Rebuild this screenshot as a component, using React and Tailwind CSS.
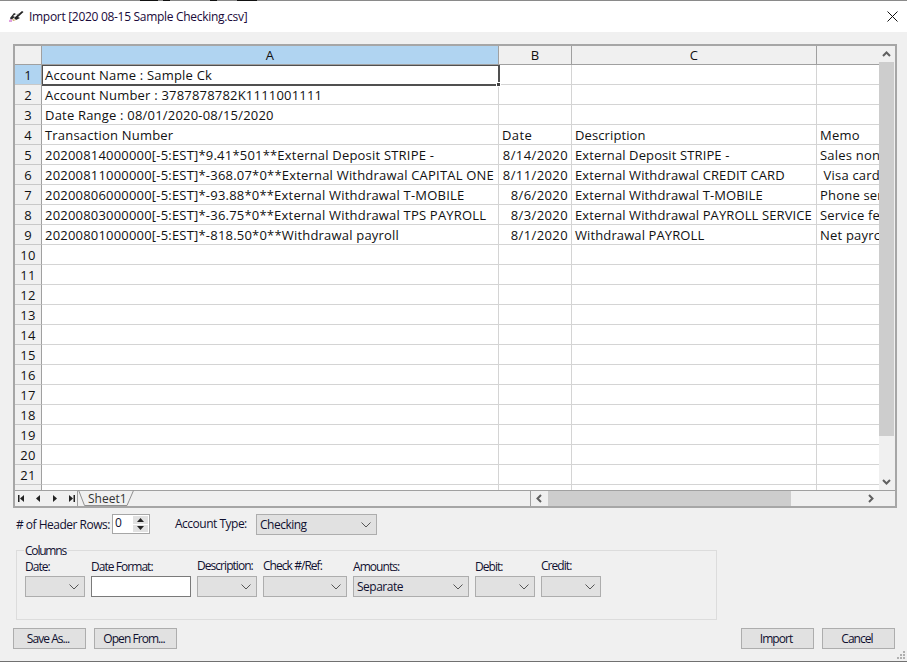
import React from 'react';

const rows = [
  ['Account Name : Sample Ck', '', '', ''],
  ['Account Number : 3787878782K1111001111', '', '', ''],
  ['Date Range : 08/01/2020-08/15/2020', '', '', ''],
  ['Transaction Number', 'Date', 'Description', 'Memo'],
  ['20200814000000[-5:EST]*9.41*501**External Deposit STRIPE -', '8/14/2020', 'External Deposit STRIPE -', 'Sales non'],
  ['20200811000000[-5:EST]*-368.07*0**External Withdrawal CAPITAL ONE', '8/11/2020', 'External Withdrawal CREDIT CARD', ' Visa card'],
  ['20200806000000[-5:EST]*-93.88*0**External Withdrawal T-MOBILE', '8/6/2020', 'External Withdrawal T-MOBILE', 'Phone ser'],
  ['20200803000000[-5:EST]*-36.75*0**External Withdrawal TPS PAYROLL', '8/3/2020', 'External Withdrawal PAYROLL SERVICE', 'Service fe'],
  ['20200801000000[-5:EST]*-818.50*0**Withdrawal payroll', '8/1/2020', 'Withdrawal PAYROLL', 'Net payrc'],
];
for (let i = 0; i < 13; i++) rows.push(['', '', '', '']);

const gridCols = 'grid grid-cols-[27px_457px_73px_245px_62px]';
const ui = "font-['Open_Sans',sans-serif] text-[12px] tracking-[-0.5px] text-[#101030]";
const tight = 'tracking-[-0.95px]';

const Chevron = () => (
  <svg width="10" height="6" viewBox="0 0 10 6" fill="none" stroke="#555" strokeWidth="1">
    <path d="M0.5 0.5 L5 5 L9.5 0.5" />
  </svg>
);

const Select = ({ width, value }) => (
  <div className={`${width} h-[21px] flex items-center justify-between pl-[3px] pr-[5px] bg-[#e1e1e1] border border-[#adadad]`}>
    <span>{value}</span>
    <Chevron />
  </div>
);

const Field = ({ label, lift, children }) => (
  <div className="flex flex-col">
    <div className={`h-[20px] pt-[2px] leading-[18px] whitespace-nowrap ${tight} ${lift ? '-mt-px' : ''}`}>{label}</div>
    <div className={lift ? 'mt-px' : ''}>{children}</div>
  </div>
);

const Button = ({ width, children }) => (
  <button className={`${width} h-[21px] pr-[3px] bg-[#e1e1e1] border border-[#adadad] leading-[18px] ${tight}`}>{children}</button>
);

const ScrollArrow = ({ d }) => (
  <svg width="9" height="9" viewBox="0 0 9 9" fill="none" stroke="#606060" strokeWidth="2">
    <path d={d} />
  </svg>
);

const NavIcon = ({ d, bar }) => (
  <svg width="8" height="9" viewBox="0 0 8 9" fill="#222">
    <path d={d} />
    {bar !== undefined && <rect x={bar} y="1" width="1.5" height="7" />}
  </svg>
);

function Sheet() {
  return (
    <div className="w-[884px] h-[464px] border-2 border-[#a6a6a6] flex flex-col bg-[#f0f0f0]">
      <div className="flex h-[444px]">
        <div className="w-[864px] h-[444px] overflow-hidden bg-white font-['Open_Sans',sans-serif] text-[13px] tracking-[0.2px] text-[#111]">
          <div className={`${gridCols} h-[19px] leading-[18px] text-center`}>
            <div className="bg-[#f0f0f0] border-r border-b border-[#a0a0a0]" />
            <div className="bg-[#b0d4f1] border-r border-b border-[#a0a0a0]">A</div>
            <div className="bg-[#f0f0f0] border-r border-b border-[#a0a0a0]">B</div>
            <div className="bg-[#f0f0f0] border-r border-b border-[#a0a0a0]">C</div>
            <div className="bg-[#f0f0f0] border-b border-[#a0a0a0]" />
          </div>
          {rows.map((r, i) => (
            <div key={i} className={`${gridCols} grid-rows-[20px] h-[20px] leading-[21px]`}>
              <div className={`text-center border-r border-b border-b-[#c8c8c8] border-r-[#a0a0a0] ${i === 0 ? 'bg-[#b0d4f1]' : 'bg-[#f0f0f0]'}`}>{i < 21 ? i + 1 : ''}</div>
              <div className="relative pl-[3px] border-r border-b border-[#d4d4d4] whitespace-nowrap">
                {r[0]}
                {i === 0 && (
                  <div className="absolute z-10 left-0 top-0 w-[458px] h-[21px] border border-b-2 border-r-2 border-[#505050]">
                    <div className="absolute right-[-3px] bottom-[-3px] w-[5px] h-[5px] bg-[#404040] border border-white" />
                  </div>
                )}
              </div>
              <div className={`pr-[3px] border-r border-b border-[#d4d4d4] whitespace-nowrap tracking-[0.4px] ${i === 3 ? 'pl-[3px] tracking-[0.2px]' : 'text-right'}`}>{r[1]}</div>
              <div className="pl-[3px] border-r border-b border-[#d4d4d4] whitespace-nowrap tracking-[0.11px]">{r[2]}</div>
              <div className="pl-[3px] border-b border-[#d4d4d4] whitespace-pre overflow-hidden">{r[3]}</div>
            </div>
          ))}
        </div>
        <div className="w-[16px] flex flex-col bg-[#f0f0f0] pr-px">
          <div className="h-[16px] flex items-center justify-center"><ScrollArrow d="M1 6 L4.5 2.5 L8 6" /></div>
          <div className="h-[374px] bg-[#cdcdcd]" />
          <div className="flex-1 flex items-end justify-center pb-[4px]"><ScrollArrow d="M1 3 L4.5 6.5 L8 3" /></div>
        </div>
      </div>
      <div className="flex h-[16px] border-t border-[#a0a0a0] bg-[#f0f0f0]">
        <div className="w-[63px] flex items-center gap-[9px] pl-[2px] border-r border-[#a0a0a0] -mt-px">
          <NavIcon d="M7 1 L7 8 L3 4.5 Z" bar={1} />
          <NavIcon d="M6 1 L6 8 L2 4.5 Z" />
          <NavIcon d="M2 1 L2 8 L6 4.5 Z" />
          <NavIcon d="M1 1 L1 8 L5 4.5 Z" bar={5.5} />
        </div>
        <div className="relative w-[453px] -mt-px border-r border-[#a0a0a0]">
          <svg className="absolute left-0 top-0" width="60" height="16" fill="none" stroke="#909090">
            <path d="M0.5 0 L6.5 15.5 L49 15.5 L55.5 0.5" />
          </svg>
          <span className="absolute left-[10px] top-0 leading-[17px] font-['Open_Sans',sans-serif] text-[12px] tracking-normal text-[#333]">Sheet1</span>
        </div>
        <div className="flex-1 flex items-center">
          <div className="w-[17px] flex justify-center"><ScrollArrow d="M6 1 L2.5 4.5 L6 8" /></div>
          <div className="w-[243px] h-[15px] bg-[#cdcdcd]" />
          <div className="flex-1 flex justify-end pr-[20px]"><ScrollArrow d="M3 1 L6.5 4.5 L3 8" /></div>
        </div>
      </div>
    </div>
  );
}

export default function App() {
  return (
    <div className="w-[907px] h-[662px] flex flex-col bg-[#f0f0f0] overflow-hidden relative">
      <div className="h-[1px] bg-[#8a8a8a] flex">
        <div className="ml-[140px] w-[18px] bg-[#111]" />
        <div className="ml-[5px] w-[7px] bg-[#111]" />
        <div className="ml-[40px] w-[7px] bg-[#111]" />
        <div className="ml-[20px] w-[20px] bg-[#111]" />
      </div>
      <div className="h-[31px] bg-white flex items-center justify-between pl-[8px] pr-[9px]">
        <div className="flex items-center gap-[5px] font-['Open_Sans',sans-serif] text-[12px] tracking-[-0.3px] text-[#1a0a3a]">
          <svg width="16" height="13" viewBox="0 0 16 13">
            <path d="M2 8 L6 3 L8 4 L5 6 L7 7 L3 10 Z" fill="#2a2a2a" />
            <path d="M6 8 L14 1 L15.5 2 L10 7 L12 8 L8 10 Z" fill="#222" />
            <path d="M8 5 L11 3 L10 5 Z" fill="#999" />
            <path d="M1 10 L4 9 L4 12 L1 12 Z" fill="#e0a0e0" />
            <path d="M4 9 L8 10 L5 11 Z" fill="#c8a860" />
          </svg>
          <span>Import [2020 08-15 Sample Checking.csv]</span>
        </div>
        <svg width="11" height="11" viewBox="0 0 11 11" stroke="#111" strokeWidth="1">
          <path d="M0.5 0.5 L10.5 10.5 M10.5 0.5 L0.5 10.5" />
        </svg>
      </div>

      <div className={`flex-1 flex flex-col pl-[13px] pt-[12px] ${ui}`}>
        <Sheet />

        <div className="flex items-start h-[36px] pt-[6px] pl-[3px]">
          <span className="w-[96px] leading-[22px]">{'# of Header Rows:'}</span>
          <div className="w-[38px] h-[20px] bg-white border border-[#a6a6a6] flex justify-between pl-[2px] pr-px leading-[16px]">
            <span>0</span>
            <div className="w-[15px] flex flex-col gap-px py-px">
              <div className="flex-1 bg-[#e1e1e1] flex items-center justify-center">
                <svg width="7" height="4" viewBox="0 0 7 4" fill="#222"><path d="M3.5 0 L7 4 L0 4 Z" /></svg>
              </div>
              <div className="flex-1 bg-[#e1e1e1] flex items-center justify-center">
                <svg width="7" height="4" viewBox="0 0 7 4" fill="#222"><path d="M0 0 L7 0 L3.5 4 Z" /></svg>
              </div>
            </div>
          </div>
          <span className="ml-[25px] w-[81px] leading-[20px]">Account Type:</span>
          <Select width="w-[121px]" value="Checking" />
        </div>

        <fieldset className="w-[701px] h-[78px] ml-[3px] border border-[#dcdcdc] px-[8px] -mt-[2px]">
          <legend className="relative top-px ml-[-1px] px-px leading-[16px] -mb-[2px] text-[12px] tracking-[-1.2px]">Columns</legend>
          <div className="flex gap-[6px]">
            <Field label="Date:"><Select width="w-[60px]" /></Field>
            <Field label="Date Format:">
              <div className="w-[100px] h-[21px] bg-white border border-[#7a7a7a]" />
            </Field>
            <Field label="Description:" lift><Select width="w-[60px]" /></Field>
            <Field label="Check #/Ref:" lift><Select width="w-[84px]" /></Field>
            <Field label="Amounts:"><Select width="w-[116px]" value="Separate" /></Field>
            <Field label="Debit:"><Select width="w-[60px]" /></Field>
            <Field label="Credit:" lift><Select width="w-[60px]" /></Field>
          </div>
        </fieldset>

        <div className="flex w-[882px] justify-between mt-[8px]">
          <div className="flex gap-[8px]">
            <Button width="w-[73px]">Save As...</Button>
            <Button width="w-[83px]">Open From...</Button>
          </div>
          <div className="flex gap-[8px]">
            <Button width="w-[73px]">Import</Button>
            <Button width="w-[73px]">Cancel</Button>
          </div>
        </div>
      </div>

      <svg className="absolute right-[1px] bottom-[2px]" width="9" height="9" fill="#b0b0b0">
        <rect x="6" y="0" width="2" height="2" />
        <rect x="3" y="3" width="2" height="2" />
        <rect x="6" y="3" width="2" height="2" />
        <rect x="0" y="6" width="2" height="2" />
        <rect x="3" y="6" width="2" height="2" />
        <rect x="6" y="6" width="2" height="2" />
      </svg>
      <div className="absolute left-0 right-0 bottom-0 h-[1px] bg-[#707070]" />
    </div>
  );
}
